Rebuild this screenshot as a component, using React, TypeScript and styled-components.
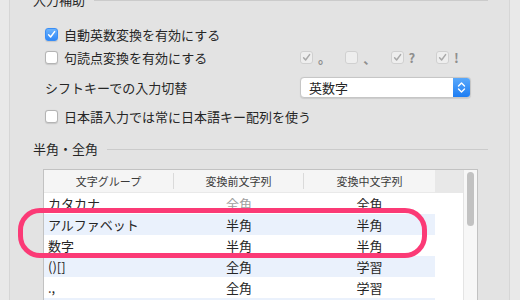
import React from "react";
import styled, { createGlobalStyle } from "styled-components";

const Global = createGlobalStyle`
  html, body { margin: 0; padding: 0; background: #e9e9e9; }
  body { font-family: "Noto Sans CJK JP", "Noto Sans", sans-serif; color: #262626; }
`;

const Window = styled.div`
  width: 520px;
  height: 300px;
  overflow: hidden;
  background: #e9e9e9;
  display: flex;
  padding-left: 9px;
  box-sizing: border-box;
`;

const Panel = styled.div`
  width: 501px;
  height: 100%;
  box-sizing: border-box;
  background: #e3e3e3;
  border-left: 1px solid #d6d6d6;
  border-right: 1px solid #d6d6d6;
  padding: 0 21px 0 23px;
  display: flex;
  flex-direction: column;
  position: relative;
  & > * { flex: none; }
`;

const Heading = styled.div<{ $mt: number }>`
  display: flex;
  align-items: center;
  height: 18px;
  margin-top: ${(p) => p.$mt}px;
  font-size: 13px;
  line-height: 18px;
  color: #262626;
  white-space: nowrap;
  &::after {
    content: "";
    flex: 1;
    height: 1px;
    background: #cbcbcb;
    margin-left: 9px;
  }
`;

const Row = styled.div<{ $mt: number; $h?: number }>`
  display: flex;
  align-items: center;
  height: ${(p) => p.$h ?? 23}px;
  margin-top: ${(p) => p.$mt}px;
  padding-left: 12px;
  font-size: 13px;
  white-space: nowrap;
`;

const Label = styled.span`
  width: 255px;
  flex: none;
  display: flex;
  align-items: center;
`;

const Box = styled.span<{ $on?: boolean; $disabled?: boolean }>`
  width: 13px;
  height: 13px;
  box-sizing: border-box;
  border-radius: 3px;
  flex: none;
  display: inline-flex;
  align-items: center;
  justify-content: center;
  border: 1px solid ${(p) => (p.$disabled ? "#d0d0d0" : p.$on ? "#3a8ef6" : "#b4b4b4")};
  background: ${(p) =>
    p.$disabled ? "#eeeeee" : p.$on ? "linear-gradient(#6cb3fc, #2f88f7)" : "#ffffff"};
  box-shadow: ${(p) => (p.$disabled ? "none" : "0 0.5px 1px rgba(0,0,0,0.12)")};
  margin-right: 6px;
`;

const CheckMark = ({ color }: { color: string }) => (
  <svg width="9" height="9" viewBox="0 0 9 9">
    <path d="M1.6 4.8 L3.6 7 L7.6 1.6" fill="none" stroke={color} strokeWidth="1.5" strokeLinecap="round" strokeLinejoin="round" />
  </svg>
);

const Check = ({ on, disabled }: { on?: boolean; disabled?: boolean }) => (
  <Box $on={on} $disabled={disabled}>
    {on && <CheckMark color={disabled ? "#a9a9a9" : "#ffffff"} />}
  </Box>
);

const Punct = styled.div`
  display: flex;
  align-items: center;
`;

const PunctItem = styled.span`
  display: flex;
  align-items: center;
  width: 45.3px;
  color: #8e8e8e;
  font-size: 13px;
  font-weight: 600;
  & > span:last-child { margin-left: -1px; }
`;

const Select = styled.div`
  width: 171px;
  height: 21px;
  box-sizing: border-box;
  display: flex;
  background: #fff;
  border: 1px solid #c6c6c6;
  border-radius: 4px;
  box-shadow: 0 0.5px 1px rgba(0,0,0,0.1);
  overflow: hidden;
`;

const SelectText = styled.span`
  flex: 1;
  padding-left: 8px;
  font-size: 13px;
  line-height: 19px;
`;

const Stepper = styled.span`
  width: 17px;
  display: flex;
  align-items: center;
  justify-content: center;
  background: linear-gradient(#5aa9fb, #1d7df3);
`;

const Table = styled.div`
  margin-top: 11px;
  margin-left: 10px;
  width: 435px;
  height: 140px;
  box-sizing: border-box;
  border: 1px solid #c2c2c2;
  background: #fff;
  display: flex;
`;

const Body = styled.div`
  width: 419px;
  display: flex;
  flex-direction: column;
`;

const HeadRow = styled.div`
  display: flex;
  height: 23px;
  flex: none;
  background: #e8e8e8;
`;

const HeadCells = styled.div`
  display: grid;
  grid-template-columns: 130px 130px 131px;
  background: #f5f5f5;
  border-bottom: 1px solid #e9e9e9;
  box-sizing: border-box;
`;

const HeadCell = styled.div<{ $div?: boolean }>`
  font-size: 11px;
  color: #3a3a3a;
  text-align: center;
  border-right: ${(p) => (p.$div ? "1px solid #dadada" : "none")};
  margin: ${(p) => (p.$div ? "3px 0" : "0")};
  line-height: ${(p) => (p.$div ? "16px" : "22px")};
`;

const DataRow = styled.div<{ $alt?: boolean }>`
  display: grid;
  flex: none;
  grid-template-columns: 130px 130px 131px;
  width: 391px;
  height: 21px;
  background: ${(p) => (p.$alt ? "#eaf1fc" : "#ffffff")};
  font-size: 13px;
  line-height: 21px;
`;

const Cell = styled.div<{ $center?: boolean; $muted?: boolean }>`
  padding-left: ${(p) => (p.$center ? 0 : 4)}px;
  text-align: ${(p) => (p.$center ? "center" : "left")};
  color: ${(p) => (p.$muted ? "#a0a0a0" : "#262626")};
  white-space: nowrap;
`;

const Scroll = styled.div`
  width: 14px;
  border-left: 1px solid #e4e4e4;
  background: #f7f7f7;
  display: flex;
  justify-content: center;
  padding-top: 2px;
  box-sizing: border-box;
`;

const Thumb = styled.div`
  width: 7px;
  height: 54px;
  border-radius: 4px;
  background: #c2c2c2;
`;

const Ring = styled.div`
  position: absolute;
  left: 8px;
  top: 208px;
  width: 409px;
  height: 50px;
  box-sizing: border-box;
  border: 5px solid #fb3a76;
  border-radius: 22px;
  pointer-events: none;
`;

const rows: [string, string, string, boolean?][] = [
  ["カタカナ", "全角", "全角", true],
  ["アルファベット", "半角", "半角"],
  ["数字", "半角", "半角"],
  ["()[]", "全角", "学習"],
  [".,", "全角", "学習"],
  ["-", "全角", "学習"],
];

export default function App() {
  return (
    <>
      <Global />
      <Window>
        <Panel>
          <Heading $mt={-9}>入力補助</Heading>
          <Row $mt={14}>
            <Check on />
            自動英数変換を有効にする
          </Row>
          <Row $mt={0}>
            <Label>
              <Check />
              句読点変換を有効にする
            </Label>
            <Punct>
              <PunctItem><Check on disabled /><span>。</span></PunctItem>
              <PunctItem><Check disabled /><span>、</span></PunctItem>
              <PunctItem><Check on disabled /><span>?</span></PunctItem>
              <PunctItem><Check on disabled /><span>!</span></PunctItem>
            </Punct>
          </Row>
          <Row $mt={7} $h={22}>
            <Label>シフトキーでの入力切替</Label>
            <Select>
              <SelectText>英数字</SelectText>
              <Stepper>
                <svg width="9" height="13" viewBox="0 0 9 13">
                  <path d="M1.5 5 L4.5 2 L7.5 5 M1.5 8 L4.5 11 L7.5 8" fill="none" stroke="#fff" strokeWidth="1.4" strokeLinecap="round" strokeLinejoin="round" />
                </svg>
              </Stepper>
            </Select>
          </Row>
          <Row $mt={7}>
            <Check />
            日本語入力では常に日本語キー配列を使う
          </Row>
          <Heading $mt={12}>半角・全角</Heading>
          <Table>
            <Body>
              <HeadRow>
                <HeadCells>
                  <HeadCell $div>文字グループ</HeadCell>
                  <HeadCell $div>変換前文字列</HeadCell>
                  <HeadCell>変換中文字列</HeadCell>
                </HeadCells>
              </HeadRow>
              {rows.map(([a, b, c, muted], i) => (
                <DataRow key={i} $alt={i % 2 === 1}>
                  <Cell>{a}</Cell>
                  <Cell $center $muted={muted}>{b}</Cell>
                  <Cell $center>{c}</Cell>
                </DataRow>
              ))}
            </Body>
            <Scroll>
              <Thumb />
            </Scroll>
          </Table>
          <Ring />
        </Panel>
      </Window>
    </>
  );
}
